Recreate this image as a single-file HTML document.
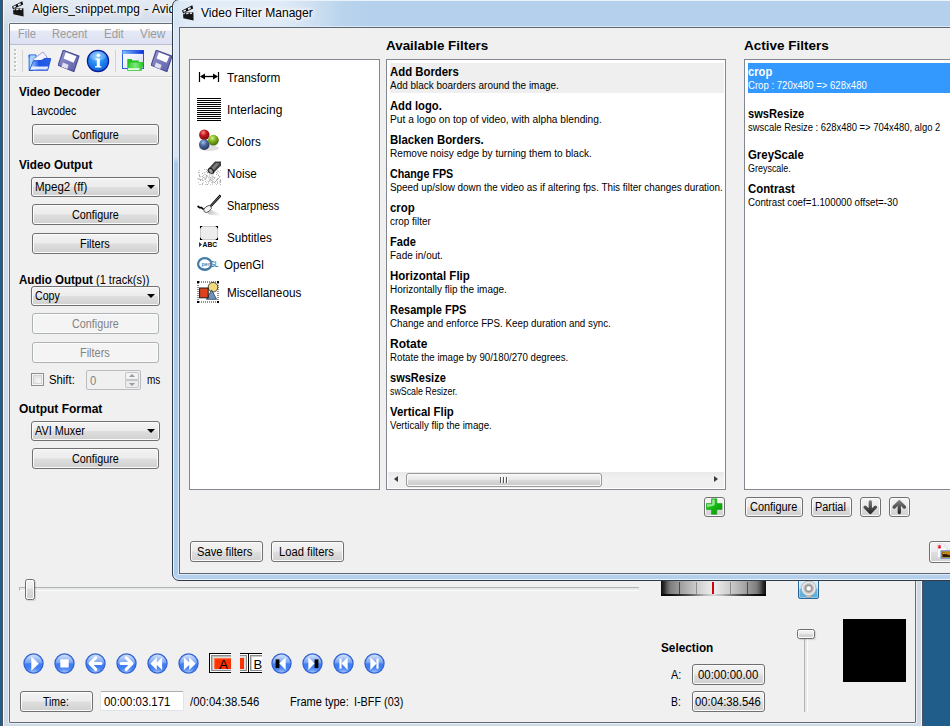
<!DOCTYPE html>
<html lang="en"><head>
<meta charset="utf-8">
<title>Video Filter Manager</title>
<style>
*{box-sizing:border-box;margin:0;padding:0}
html,body{width:950px;height:726px;overflow:hidden;background:#215d8a}
body{position:relative;font-family:"Liberation Sans",sans-serif;font-size:12px;color:#000}
.a{position:absolute}
.t{position:absolute;white-space:nowrap;line-height:14px;height:14px;font-size:12px;transform-origin:0 0}
.b{font-weight:bold}
.h{font-weight:bold;font-size:13px}
.l{font-size:13px}
.d{font-size:10px}
.g{color:#9c9c9c}
.dis{color:#838383}
.w{color:#fff}
/* main window frame */
#mw{left:2px;top:-10px;width:921px;height:746px;background:#cfdae7;border:1px solid #4c525c;border-radius:7px;box-shadow:inset 0 0 0 1px #f4f8fc}
#mwt{left:4px;top:0;width:917px;height:23px;background:linear-gradient(#e4ebf3,#d9e2ed 60%,#d3dde9)}
#mwin{left:9px;top:23px;width:907px;height:700px;background:#f0f0f0;border:1px solid #666b73;border-radius:1px;box-shadow:0 0 0 1px #e9eff6}
#menubar{left:10px;top:24px;width:905px;height:21px;background:linear-gradient(#ffffff 0,#fcfcfe 30%,#e5e8f6 37%,#dde1f2 100%);border-bottom:1px solid #b9bfd0}
#toolbar{left:10px;top:45px;width:905px;height:33px;background:#f1f1f1;border-bottom:1px solid #fafafa;box-shadow:inset 0 -1px 0 #d0d0d0}
.btn{position:absolute;height:21px;border:1px solid #707070;border-radius:3px;background:linear-gradient(#f3f3f3 0,#ececec 47%,#dedede 53%,#d0d0d0 100%);box-shadow:inset 0 0 0 1px #fbfbfb}
.btn.off{border-color:#adb2b5;background:#f4f4f4;box-shadow:inset 0 0 0 1px #fcfcfc}
.arr{position:absolute;width:0;height:0;border:4px solid transparent;border-top:4px solid #000;border-bottom:0}
/* dialog */
#dlg{left:172px;top:-1px;width:800px;height:582px;background:#b4d0ec;border:1px solid #2e3a48;border-radius:7px 0 0 7px;box-shadow:inset 0 0 0 1px #eaf2fb}
#dlgt{left:174px;top:1px;width:790px;height:26px;border-radius:6px 0 0 0;background:linear-gradient(90deg,#d6e5f4 0,#e3edf8 18px,#e0ebf7 105px,#cfe0f2 138px,#bad4ed 168px,#b4d0ec 200px,#b4d0ec 100%)}
#dlgl{left:174px;top:27px;width:5px;height:547px;background:linear-gradient(#dbe7f4 0,#d6e4f3 130px,#a9caee 136px,#aaccef 100%)}
#dlgin{left:179px;top:27px;width:790px;height:547px;background:#f0f0f0;border:1px solid #5d6772;box-shadow:0 0 0 1px #dde9f6}
.list{position:absolute;background:#fff;border:1px solid #828790}
.rb{position:absolute;width:21px;height:21px}
</style>
</head>
<body>
<!-- MAIN WINDOW -->
<div class="a" id="mw"></div>
<div class="a" id="mwt"></div>
<div class="a" id="mwin"></div>
<div class="a" id="menubar"></div>
<div class="a" id="toolbar"></div>
<span class="t" style="font-size: 13px; text-shadow: rgb(255, 255, 255) 0px 0px 6px, rgb(255, 255, 255) 0px 0px 6px, rgb(255, 255, 255) 0px 0px 8px; left: 31.5px; top: 1.5px; transform: scaleX(0.9151);">Algiers_snippet.mpg</span>
<span class="t" style="font-size: 13px; text-shadow: rgb(255, 255, 255) 0px 0px 6px, rgb(255, 255, 255) 0px 0px 6px, rgb(255, 255, 255) 0px 0px 8px; left: 143.6px; top: 1.5px; transform: scaleX(1.105);">-</span>
<span class="t" style="font-size: 13px; text-shadow: rgb(255, 255, 255) 0px 0px 6px, rgb(255, 255, 255) 0px 0px 6px, rgb(255, 255, 255) 0px 0px 8px; transform: scaleX(0.92); left: 151.5px; top: 1.5px;">Avidemux</span>
<span class="t g" style="left: 17.5px; top: 26.8px; transform: scaleX(0.9202);">File</span>
<span class="t g" style="left: 51.5px; top: 26.8px; transform: scaleX(0.9282);">Recent</span>
<span class="t g" style="left: 103.5px; top: 26.8px; transform: scaleX(0.9571);">Edit</span>
<span class="t g" style="left: 140px; top: 26.8px; transform: scaleX(0.9807);">View</span>

<span class="t b" style="left: 19px; top: 84.8px; transform: scaleX(0.97);">Video Decoder</span>
<span class="t" style="left: 30.5px; top: 103.8px; transform: scaleX(0.8818);">Lavcodec</span>
<div class="btn" style="left:32px;top:124px;width:127px"></div>
<span class="t" style="left: 71.5px; top: 127.8px; transform: scaleX(0.8995);">Configure</span>
<span class="t b" style="left: 19px; top: 157.8px; transform: scaleX(0.9759);">Video Output</span>
<div class="btn" style="left:31px;top:177px;width:129px;height:20px"></div><i class="arr" style="left:147px;top:185px"></i>
<span class="t" style="left: 34.5px; top: 179.8px; transform: scaleX(0.9602);">Mpeg2 (ff)</span>
<div class="btn" style="left:32px;top:204px;width:127px"></div>
<span class="t" style="left: 71.5px; top: 207.8px; transform: scaleX(0.8995);">Configure</span>
<div class="btn" style="left:32px;top:233px;width:127px"></div>
<span class="t" style="left: 80px; top: 236.8px; transform: scaleX(0.9121);">Filters</span>
<span class="t b" style="left: 19px; top: 272.8px; transform: scaleX(0.9629);">Audio Output</span>
<span class="t" style="left: 96px; top: 272.8px; transform: scaleX(0.919);">(1 track(s))</span>
<div class="btn" style="left:31px;top:286px;width:129px;height:20px"></div><i class="arr" style="left:147px;top:294px"></i>
<span class="t" style="left: 34.5px; top: 288.8px; transform: scaleX(0.8852);">Copy</span>
<div class="btn off" style="left:32px;top:313px;width:127px"></div>
<span class="t dis" style="left: 71.5px; top: 316.8px; transform: scaleX(0.8995);">Configure</span>
<div class="btn off" style="left:32px;top:342px;width:127px"></div>
<span class="t dis" style="left: 80px; top: 345.8px; transform: scaleX(0.9121);">Filters</span>
<div class="a" style="left:31px;top:373px;width:13px;height:13px;border:1px solid #8e8f8f;background:#f4f4f4;box-shadow:inset 0 0 0 1px #f4f4f4,inset 0 0 0 2px #d2d4d6,inset 2px 2px 3px 2px #e2e3e5"></div>
<span class="t" style="left: 48.5px; top: 372.8px; transform: scaleX(0.943);">Shift:</span>
<div class="a" style="left:86px;top:370px;width:55px;height:20px;border:1px solid #b9bdc2;border-radius:2px;background:#f0f0f0"></div>
<span class="t dis" style="left: 89.5px; top: 373.8px; transform: scaleX(0.9421);">0</span>
<div class="a" style="left:125px;top:372px;width:14px;height:8px;border:1px solid #c4c6c9;border-radius:2px 2px 0 0;background:#f2f2f2"></div>
<div class="a" style="left:125px;top:380px;width:14px;height:8px;border:1px solid #c4c6c9;border-radius:0 0 2px 2px;background:#ebebeb"></div>
<i class="a" style="left:129px;top:374px;border:3px solid transparent;border-bottom:3px solid #9a9a9a;border-top:0"></i>
<i class="a" style="left:129px;top:383px;border:3px solid transparent;border-top:3px solid #9a9a9a;border-bottom:0"></i>
<span class="t" style="left: 146.5px; top: 372.8px; transform: scaleX(0.8313);">ms</span>
<span class="t b" style="left: 19px; top: 401.8px; transform: scaleX(0.9997);">Output Format</span>
<div class="btn" style="left:31px;top:421px;width:129px;height:20px"></div><i class="arr" style="left:147px;top:429px"></i>
<span class="t" style="left: 34.5px; top: 423.8px; transform: scaleX(0.9034);">AVI Muxer</span>
<div class="btn" style="left:32px;top:448px;width:127px"></div>
<span class="t" style="left: 71.5px; top: 451.8px; transform: scaleX(0.8995);">Configure</span>
<!-- title + toolbar icons -->
<svg width="0" height="0" style="position:absolute">
<defs>
<g id="clap">
<path d="M1 6.4 L11.3 1.2 L12.2 4.6 L2 9.2Z" fill="#111"></path>
<path d="M2.2 6.6 L4.6 5.4 L5 7 L2.8 8Z M6.8 4.3 L9.4 3 L9.8 4.7 L7.3 5.9Z" fill="#f2f2f2"></path>
<path d="M2 8.6 L12.4 8.2 L12.6 16.4 L2.3 14.2Z" fill="#161616"></path>
<path d="M2.3 8.9 L4.2 8.8 L3.4 10.2 L2.3 10.3Z M5.6 8.8 L8 8.7 L7.2 10 L4.9 10.2Z M9.4 8.6 L11.4 8.5 L10.6 9.9 L8.6 10Z" fill="#e9e9e9"></path>
</g>
<linearGradient id="fl1" x1="0" y1="0" x2="1" y2="1"><stop offset="0" stop-color="#9395cf"></stop><stop offset="1" stop-color="#5c5ea6"></stop></linearGradient>
<g id="floppy">
<path d="M5.2 0.2 L21 6.2 L15.9 21.6 L0.1 15.3Z" fill="url(#fl1)" stroke="#484a90" stroke-width="1.100"></path>
<path d="M7.800 2.300 L18.300 6.300 L15.600 12.700 L5.600 8.600Z" fill="#fdfdff"></path>
<path d="M5 12.600 L10.800 14.900 L9.400 18.900 L3.500 16.700Z" fill="#e0e0f4"></path>
<path d="M10.6 15.2 L12.6 16 L11.4 19.3 L9.4 18.6Z" fill="#7173b4"></path>
</g>
<linearGradient id="fo1" x1="0" y1="0" x2="1" y2="0"><stop offset="0" stop-color="#bfe6ff"></stop><stop offset="0.45" stop-color="#1a55e8"></stop><stop offset="1" stop-color="#2a60e8"></stop></linearGradient>
<linearGradient id="wt" x1="0" y1="0" x2="1" y2="0"><stop offset="0" stop-color="#7cc0ff"></stop><stop offset="1" stop-color="#0a2fd6"></stop></linearGradient>
<linearGradient id="wb" x1="0" y1="0" x2="1" y2="1"><stop offset="0" stop-color="#ffffff"></stop><stop offset="1" stop-color="#d8dcf4"></stop></linearGradient>
<linearGradient id="gf" x1="0" y1="0" x2="1" y2="0"><stop offset="0" stop-color="#2fd12f"></stop><stop offset="0.5" stop-color="#7be87b"></stop><stop offset="1" stop-color="#22c022"></stop></linearGradient>
<radialGradient id="inf" cx="45%" cy="30%" r="75%"><stop offset="0" stop-color="#7cc4ff"></stop><stop offset="0.5" stop-color="#1e86f2"></stop><stop offset="1" stop-color="#0a58d8"></stop></radialGradient>
</defs>
</svg>
<svg class="a" style="left:11px;top:0" width="14" height="18" viewBox="0 0 14 18"><use href="#clap"></use></svg>
<!-- toolbar grip + separators -->
<div class="a" style="left:14px;top:49px;width:2px;height:2px;background:#c4c4c4;box-shadow:0 4px 0 #c4c4c4,0 8px 0 #c4c4c4,0 12px 0 #c4c4c4,0 16px 0 #c4c4c4,0 20px 0 #c4c4c4,1px 1px 0 #fff,1px 5px 0 #fff,1px 9px 0 #fff,1px 13px 0 #fff,1px 17px 0 #fff,1px 21px 0 #fff"></div>
<div class="a" style="left:22px;top:50px;width:1px;height:22px;background:#d2d2d2"></div>
<div class="a" style="left:115px;top:50px;width:1px;height:22px;background:#d2d2d2"></div>
<!-- open folder -->
<svg class="a" style="left:28px;top:50px" width="24" height="22" viewBox="0 0 24 22">
<path d="M1.2 5 H8 V7.5 H1.2Z M1.2 5 V20.4 H5" fill="#a8dcff" stroke="#1248d8" stroke-width="1"></path>
<path d="M1.7 5.5 H7.5 L4 20 H1.7Z" fill="#9ed6ff"></path>
<path d="M4.8 9.6 L15 2 L19.4 7.7 L9 12Z" fill="#f4f4ff" stroke="#7a7cc8" stroke-width="0.7"></path>
<path d="M5.5 10.8 L14 10.4 L16.5 8.4 L22.8 8.6 L19.7 20.3 L1.4 20.3Z" fill="url(#fo1)" stroke="#1040d0" stroke-width="0.8"></path>
<path d="M3.6 16.6 L20.2 16.6 L19.4 19.4 L2.6 19.4Z" fill="#f1f4ff" opacity="0.92"></path>
</svg>
<!-- floppy 1 -->
<svg class="a" style="left:58px;top:50px" width="22" height="22" viewBox="0 0 22 22"><use href="#floppy"></use></svg>
<!-- info -->
<svg class="a" style="left:86px;top:49px" width="24" height="24" viewBox="0 0 24 24">
<circle cx="12" cy="12" r="10.6" fill="url(#inf)" stroke="#0c1a96" stroke-width="1.2"></circle>
<ellipse cx="12" cy="7" rx="8" ry="4.6" fill="#fff" opacity="0.22"></ellipse>
<circle cx="12.4" cy="6.2" r="1.8" fill="#fff"></circle>
<path d="M9.4 9.6 H13.8 V17.2 H15.4 V18.4 H9 V17.2 H10.8 V10.8 H9.4Z" fill="#fff"></path>
</svg>
<!-- window + green folder -->
<svg class="a" style="left:121px;top:49px" width="24" height="23" viewBox="0 0 24 23">
<rect x="1.5" y="1.5" width="21" height="18" fill="url(#wb)" stroke="#2a5cdc" stroke-width="1"></rect>
<rect x="1.5" y="1.5" width="21" height="3.4" fill="url(#wt)"></rect>
<path d="M6.3 10 H10.6 L11.4 11.4 H17.8 V13 H22.6 L20.6 21.8 H6.3Z" fill="#22c222"></path>
<path d="M8.6 13.4 H22.6 L20.4 21 H6.6Z" fill="url(#gf)"></path>
<path d="M7.2 19.2 H18.6 L18.2 21 H6.8Z" fill="#eaffea"></path>
</svg>
<!-- floppy 2 -->
<svg class="a" style="left:151px;top:50px" width="22" height="22" viewBox="0 0 22 22"><use href="#floppy"></use></svg>
<!-- BOTTOM CONTROLS -->
<svg width="0" height="0" style="position:absolute">
<defs>
<linearGradient id="gloss" x1="0" y1="0" x2="0" y2="1"><stop offset="0" stop-color="#d4e2fb"></stop><stop offset="1" stop-color="#6f9df2"></stop></linearGradient>
<radialGradient id="glow" cx="50%" cy="100%" r="75%"><stop offset="0" stop-color="#a9c6fa"></stop><stop offset="0.6" stop-color="#5e93f4" stop-opacity="0.6"></stop><stop offset="1" stop-color="#3f7ef3" stop-opacity="0"></stop></radialGradient>
<g id="rb"><circle cx="10.5" cy="10.5" r="10.3" fill="#c9d3e6" opacity="0.6"></circle><circle cx="10.5" cy="10.5" r="9.5" fill="#3f7ef3" stroke="#3564d2" stroke-width="1.3"></circle><path d="M1.600 10.5 A8.900 8.900 0 0 1 19.400 10.5 Q10.5 9.300 1.600 10.5Z" fill="url(#gloss)"></path><path d="M1.600 10.500 A8.900 8.900 0 0 0 19.400 10.500Z" fill="url(#glow)"></path></g>
</defs>
</svg>
<!-- seek slider -->
<div class="a" style="left:19px;top:587px;width:620px;height:4px;border-top:1px solid #b2b2b2;border-left:1px solid #b2b2b2;border-bottom:1px solid #fcfcfc;background:#e7eaea"></div>
<div class="a" style="left:25px;top:579px;width:10px;height:21px;border:1px solid #6e6e6e;border-radius:2.500px;background:linear-gradient(#f3f3f3 0,#ebebeb 44%,#dcdcdc 46%,#cfcfcf 100%);box-shadow:inset 0 0 0 1px #fcfcfc,1px 1px 1px rgba(0,0,0,0.12)"></div>
<!-- round buttons -->
<svg class="rb" style="left:23.2px;top:652.7px" viewBox="0 0 21 21"><use href="#rb"></use><path d="M8.300 3.600 L15.800 10.700 L8.300 17.800Z" fill="#fff"></path></svg>
<svg class="rb" style="left:54.2px;top:652.7px" viewBox="0 0 21 21"><use href="#rb"></use><rect x="6.300" y="6.300" width="8.400" height="8.200" fill="#fff"></rect></svg>
<svg class="rb" style="left:85.2px;top:652.7px" viewBox="0 0 21 21"><use href="#rb"></use><path d="M16 10.600 H5.500 M10.800 4.800 L5 10.600 L10.800 16.400" stroke="#fff" stroke-width="3" stroke-linecap="round" stroke-linejoin="round" fill="none"></path></svg>
<svg class="rb" style="left:116.2px;top:652.7px" viewBox="0 0 21 21"><use href="#rb"></use><path d="M5 10.600 H15.500 M10.200 4.800 L16 10.600 L10.200 16.400" stroke="#fff" stroke-width="3" stroke-linecap="round" stroke-linejoin="round" fill="none"></path></svg>
<svg class="rb" style="left:147.2px;top:652.7px" viewBox="0 0 21 21"><use href="#rb"></use><path d="M3.300 10.700 L9.800 4.300 L9.800 17.100Z M8.600 10.700 L15.100 4.300 L15.100 17.100Z" fill="#fff"></path></svg>
<svg class="rb" style="left:178.2px;top:652.7px" viewBox="0 0 21 21"><use href="#rb"></use><path d="M17.700 10.700 L11.200 4.300 L11.200 17.100Z M12.400 10.700 L5.900 4.300 L5.900 17.100Z" fill="#fff"></path></svg>
<!-- A / B markers -->
<div class="a" style="left:209px;top:653px;width:22px;height:20px;border:1px solid #000;border-right:0;background:#fff"></div>
<div class="a" style="left:211px;top:655px;width:20px;height:16px;border:1px solid #8c8c8c;border-right:0;background:#dcdcdc;box-shadow:inset 1px 1px 0 #bdbdbd"></div>
<div class="a" style="left:214px;top:658px;width:17px;height:11px;background:#ff3300;box-shadow:inset 1px 1px 1px #ff7a52"></div>
<span class="t" style="font-size: 13px; left: 219.2px; top: 657.5px;">A</span>
<div class="a" style="left:240px;top:653px;width:22px;height:20px;overflow:hidden;border-top:1px solid #000;border-bottom:1px solid #000;background:#fff">
<div class="a" style="left:0;top:1px;width:7px;height:16px;border:1px solid #8c8c8c;border-left:0;background:#dcdcdc"></div>
<div class="a" style="left:0;top:4px;width:4px;height:11px;background:#ff3300"></div>
<div class="a" style="left:8px;top:0;width:1px;height:18px;background:#000"></div>
<div class="a" style="left:10px;top:1px;width:14px;height:16px;border:1px solid #8c8c8c;background:#fff;box-shadow:inset 1px 1px 0 #c9c9c9"></div>
<span class="t" style="font-size: 13px; left: 13.5px; top: 3.5px;">B</span>
</div>
<svg class="rb" style="left:271.2px;top:652.7px" viewBox="0 0 21 21"><use href="#rb"></use><rect x="4.600" y="6.400" width="3.800" height="8.700" fill="#000"></rect><path d="M8.400 10.600 L14.700 4.300 L14.700 16.900Z" fill="#fff"></path></svg>
<svg class="rb" style="left:302.2px;top:652.7px" viewBox="0 0 21 21"><use href="#rb"></use><rect x="12.600" y="6.400" width="3.800" height="8.700" fill="#000"></rect><path d="M12.600 10.600 L6.300 4.300 L6.300 16.900Z" fill="#fff"></path></svg>
<svg class="rb" style="left:333.2px;top:652.7px" viewBox="0 0 21 21"><use href="#rb"></use><rect x="6.400" y="5.600" width="2.200" height="10.100" fill="#fff"></rect><path d="M8.400 10.600 L14.700 4.300 L14.700 16.900Z" fill="#fff"></path></svg>
<svg class="rb" style="left:364.2px;top:652.7px" viewBox="0 0 21 21"><use href="#rb"></use><rect x="12.400" y="5.600" width="2.200" height="10.100" fill="#fff"></rect><path d="M12.600 10.600 L6.300 4.300 L6.300 16.900Z" fill="#fff"></path></svg>
<!-- time row -->
<div class="btn" style="left:20px;top:691px;width:73px"></div>
<span class="t" style="left: 42.5px; top: 694.8px; transform: scaleX(0.8727);">Time:</span>
<div class="a" style="left:100px;top:691px;width:84px;height:20px;border:1px solid #dfe4ea;border-top-color:#abadb3;border-radius:2px;background:#fff"></div>
<span class="t" style="left: 104px; top: 694.8px; transform: scaleX(0.9461);">00:00:03.171</span>
<span class="t" style="left: 190px; top: 694.8px; transform: scaleX(0.9441);">/00:04:38.546</span>
<span class="t" style="left: 289.5px; top: 694.8px; transform: scaleX(0.9183);">Frame type:</span>
<span class="t" style="left: 353.5px; top: 694.8px; transform: scaleX(0.9017);">I-BFF (03)</span>
<!-- jog wheel -->
<div class="a" style="left:661px;top:581px;width:105px;height:15px;background:linear-gradient(90deg,#0c0c0c 0,#2c2c2c 3%,#5e5e5e 6%,#7e7e7e 9%,#a4a4a4 20%,#cfcfcf 35%,#efefef 50%,#cfcfcf 65%,#a4a4a4 80%,#7e7e7e 91%,#5e5e5e 94%,#2c2c2c 97%,#0c0c0c 100%)"></div>
<div class="a" style="left:661px;top:594px;width:105px;height:2px;background:linear-gradient(90deg,#000 0,#111 10%,rgba(40,40,40,0.75) 25%,rgba(120,120,120,0.35) 42%,rgba(150,150,150,0.25) 50%,rgba(120,120,120,0.35) 58%,rgba(40,40,40,0.75) 75%,#111 90%,#000 100%)"></div>
<div class="a" style="left:661px;top:580px;width:105px;height:1px;background:#3a3a3a"></div>
<div class="a" style="left:679px;top:582px;width:1px;height:12px;background:#4a4a4a"></div>
<div class="a" style="left:696px;top:582px;width:1px;height:12px;background:#8e8e8e"></div>
<div class="a" style="left:712px;top:582px;width:2px;height:12px;background:#d4000c"></div>
<div class="a" style="left:730px;top:582px;width:1px;height:12px;background:#8e8e8e"></div>
<div class="a" style="left:747px;top:582px;width:1px;height:12px;background:#4a4a4a"></div>
<!-- speaker -->
<div class="a" style="left:798px;top:577px;width:21px;height:22px;border:1px solid #2c6699;border-radius:2px;background:linear-gradient(#dff1fc 0,#c4e3f6 52%,#6fb9e2 54%,#5aaedb 100%);box-shadow:inset 0 0 0 1px rgba(255,255,255,0.35)"></div>
<svg class="a" style="left:800px;top:580px" width="18" height="18" viewBox="0 0 18 18"><defs><radialGradient id="spk" cx="50%" cy="50%" r="50%"><stop offset="0" stop-color="#ffffff"></stop><stop offset="0.22" stop-color="#f4f4f4"></stop><stop offset="0.42" stop-color="#8f8f8f"></stop><stop offset="0.62" stop-color="#c4c4c4"></stop><stop offset="0.85" stop-color="#f0f0f0"></stop><stop offset="1" stop-color="#cdcdcd"></stop></radialGradient></defs><path d="M5.400 14 H12 L11.400 17.200 H6Z" fill="#d9d9d9" stroke="#8c8c8c" stroke-width="0.700"></path><circle cx="8.700" cy="8.400" r="7.400" fill="url(#spk)" stroke="#9e9e9e" stroke-width="0.600"></circle></svg>
<!-- volume slider -->
<div class="a" style="left:804px;top:634px;width:4px;height:78px;border-left:1px solid #b2b2b2;border-right:1px solid #fcfcfc;background:#e7eaea"></div>
<div class="a" style="left:797px;top:629px;width:18px;height:10px;border:1px solid #6e6e6e;border-radius:2.500px;background:linear-gradient(#f3f3f3 0,#ebebeb 44%,#dcdcdc 46%,#cfcfcf 100%);box-shadow:inset 0 0 0 1px #fcfcfc,1px 1px 1px rgba(0,0,0,0.12)"></div>
<div class="a" style="left:843px;top:619px;width:63px;height:63px;background:#000"></div>
<!-- selection -->
<span class="t b" style="left: 661px; top: 640.8px; transform: scaleX(0.9801);">Selection</span>
<span class="t" style="left: 671px; top: 667.8px; transform: scaleX(0.908);">A:</span>
<div class="btn" style="left:692px;top:664px;width:73px"></div>
<span class="t" style="left: 697.5px; top: 667.8px; transform: scaleX(0.951);">00:00:00.00</span>
<span class="t" style="left: 671px; top: 694.8px; transform: scaleX(0.8639);">B:</span>
<div class="btn" style="left:692px;top:691px;width:73px"></div>
<span class="t" style="left: 695px; top: 694.8px; transform: scaleX(0.939);">00:04:38.546</span>
<!-- DIALOG -->
<div class="a" id="dlg"></div>
<div class="a" id="dlgt"></div>
<div class="a" id="dlgl"></div>
<div class="a" id="dlgin"></div>
<span class="t" style="font-size: 13px; text-shadow: rgb(255, 255, 255) 0px 0px 6px, rgb(255, 255, 255) 0px 0px 6px, rgb(255, 255, 255) 0px 0px 8px; left: 201px; top: 5.5px; transform: scaleX(0.9283);">Video Filter Manager</span>
<svg class="a" style="left:181px;top:4px" width="14" height="18" viewBox="0 0 14 18"><use href="#clap"></use></svg>
<!-- category list -->
<div class="list" style="left:189px;top:59px;width:191px;height:431px"></div>
<span class="t l" style="left: 227px; top: 70.5px; transform: scaleX(0.9072);">Transform</span>
<span class="t l" style="left: 227px; top: 102.5px; transform: scaleX(0.9219);">Interlacing</span>
<span class="t l" style="left: 227px; top: 134.5px; transform: scaleX(0.8995);">Colors</span>
<span class="t l" style="left: 227px; top: 166.5px; transform: scaleX(0.8962);">Noise</span>
<span class="t l" style="left: 227px; top: 198.5px; transform: scaleX(0.8414);">Sharpness</span>
<span class="t l" style="left: 227px; top: 230.5px; transform: scaleX(0.8982);">Subtitles</span>
<span class="t l" style="left: 224px; top: 257.5px; transform: scaleX(0.8881);">OpenGl</span>
<span class="t l" style="left: 227px; top: 285.5px; transform: scaleX(0.902);">Miscellaneous</span>
<!-- available filters -->
<span class="t h" style="left: 386px; top: 38.5px; transform: scaleX(1.0309);">Available Filters</span>
<div class="list" style="left:386px;top:59px;width:340px;height:431px"></div>
<div class="a" style="left:390px;top:63px;width:334px;height:30px;background:#efefef"></div>
<span class="t b l" style="left: 390px; top: 64.5px; transform: scaleX(0.8738);">Add Borders</span>
<span class="t d" style="left: 390px; top: 78.5px; transform: scaleX(0.9955);">Add black boarders around the image.</span>
<span class="t b l" style="left: 390px; top: 98.5px; transform: scaleX(0.8642);">Add logo.</span>
<span class="t d" style="left: 390px; top: 112.5px; transform: scaleX(1.0213);">Put a logo on top of video, with alpha blending.</span>
<span class="t b l" style="left: 390px; top: 132.5px; transform: scaleX(0.8771);">Blacken Borders.</span>
<span class="t d" style="left: 390px; top: 146.5px; transform: scaleX(1.0084);">Remove noisy edge by turning them to black.</span>
<span class="t b l" style="left: 390px; top: 166.5px; transform: scaleX(0.8266);">Change FPS</span>
<span class="t d" style="left: 390px; top: 180.5px; transform: scaleX(0.9885);">Speed up/slow down the video as if altering fps. This filter changes duration.</span>
<span class="t b l" style="left: 390px; top: 200.5px; transform: scaleX(0.8803);">crop</span>
<span class="t d" style="left: 390px; top: 214.5px; transform: scaleX(0.9921);">crop filter</span>
<span class="t b l" style="left: 390px; top: 234.5px; transform: scaleX(0.8503);">Fade</span>
<span class="t d" style="left: 390px; top: 248.5px; transform: scaleX(0.9998);">Fade in/out.</span>
<span class="t b l" style="left: 390px; top: 268.5px; transform: scaleX(0.8839);">Horizontal Flip</span>
<span class="t d" style="left: 390px; top: 282.5px; transform: scaleX(0.9959);">Horizontally flip the image.</span>
<span class="t b l" style="left: 390px; top: 302.5px; transform: scaleX(0.8447);">Resample FPS</span>
<span class="t d" style="left: 390px; top: 316.5px; transform: scaleX(0.9758);">Change and enforce FPS. Keep duration and sync.</span>
<span class="t b l" style="left: 390px; top: 336.5px; transform: scaleX(0.9221);">Rotate</span>
<span class="t d" style="left: 390px; top: 350.5px; transform: scaleX(0.9689);">Rotate the image by 90/180/270 degrees.</span>
<span class="t b l" style="left: 389.5px; top: 370.5px; transform: scaleX(0.8485);">swsResize</span>
<span class="t d" style="left: 389.5px; top: 384.5px; transform: scaleX(0.8839);">swScale Resizer.</span>
<span class="t b l" style="left: 390px; top: 404.5px; transform: scaleX(0.8742);">Vertical Flip</span>
<span class="t d" style="left: 390px; top: 418.5px; transform: scaleX(0.9689);">Vertically flip the image.</span>
<!-- h scrollbar -->
<div class="a" style="left:388px;top:472px;width:336px;height:16px;background:linear-gradient(#e9e9e9,#f1f1f1 40%,#f0f0f0)"></div>
<i class="a" style="left:394px;top:476px;border:3.500px solid transparent;border-right:4px solid #3a3a3a;border-left:0"></i>
<i class="a" style="left:714px;top:476px;border:3.500px solid transparent;border-left:4px solid #3a3a3a;border-right:0"></i>
<div class="a" style="left:406px;top:473px;width:196px;height:14px;border:1px solid #989898;border-radius:3px;background:linear-gradient(#f5f5f5 0,#e9e9e9 45%,#d8d8d8 55%,#c8c8c8 100%);box-shadow:inset 0 0 0 1px #fafafa"></div>
<div class="a" style="left:500px;top:477px;width:1px;height:6px;background:#555;box-shadow:3px 0 0 #555,6px 0 0 #555,1px 0 0 #fff,4px 0 0 #fff,7px 0 0 #fff"></div>
<!-- add button -->
<div class="btn" style="left:704px;top:497px;width:21px;height:20px"></div>
<svg class="a" style="left:706px;top:498.400px" width="17" height="17" viewBox="0 0 17 17"><defs><linearGradient id="pg" x1="0" y1="0" x2="1" y2="1"><stop offset="0" stop-color="#35d835"></stop><stop offset="0.5" stop-color="#12b812"></stop><stop offset="1" stop-color="#0a930a"></stop></linearGradient></defs><path d="M5.500 0.800 H10.800 V5.600 H16 V11.400 H10.800 V16.200 H5.500 V11.400 H0.300 V5.600 H5.500Z" fill="url(#pg)" stroke="#0d9a0d" stroke-width="0.600" stroke-linejoin="round"></path><path d="M6.200 1.500 H8.800 V6.300 Q8.800 8.500 1 8.700 V6.300 H6.200Z" fill="#b9f2b9" opacity="0.750"></path></svg>
<!-- active filters -->
<span class="t h" style="left: 744px; top: 38.5px; transform: scaleX(1.0385);">Active Filters</span>
<div class="list" style="left:744px;top:59px;width:241px;height:431px"></div>
<div class="a" style="left:748px;top:63px;width:210px;height:30px;background:#3399ff"></div>
<span class="t b l w" style="left: 748px; top: 64.5px; transform: scaleX(0.8626);">crop</span>
<span class="t d w" style="left: 748px; top: 78.5px; transform: scaleX(0.9582);">Crop : 720x480 =&gt; 628x480</span>
<span class="t b l" style="left: 747.5px; top: 106.5px; transform: scaleX(0.8561);">swsResize</span>
<span class="t d" style="left: 747.5px; top: 120.5px; transform: scaleX(0.9425);">swscale Resize : 628x480 =&gt; 704x480, algo 2</span>
<span class="t b l" style="left: 748px; top: 147.5px; transform: scaleX(0.8772);">GreyScale</span>
<span class="t d" style="left: 748px; top: 161.5px; transform: scaleX(0.8955);">Greyscale.</span>
<span class="t b l" style="left: 748px; top: 181.5px; transform: scaleX(0.8755);">Contrast</span>
<span class="t d" style="left: 748px; top: 195.5px; transform: scaleX(0.9704);">Contrast coef=1.100000 offset=-30</span>
<div class="btn" style="left:745px;top:497px;width:58px;height:20px"></div>
<span class="t" style="left: 749.5px; top: 499.8px; transform: scaleX(0.9091);">Configure</span>
<div class="btn" style="left:811px;top:497px;width:41px;height:20px"></div>
<span class="t" style="left: 815px; top: 499.8px; transform: scaleX(0.9055);">Partial</span>
<svg width="0" height="0" style="position:absolute"><defs><linearGradient id="ag" x1="0" y1="0" x2="0" y2="1"><stop offset="0" stop-color="#777"></stop><stop offset="1" stop-color="#2b2b2b"></stop></linearGradient></defs></svg>
<div class="btn" style="left:860px;top:497px;width:21px;height:20px"></div>
<svg class="a" style="left:860px;top:497px" width="21" height="20" viewBox="0 0 21 20"><path d="M10.300 4.800 V15 M5.200 10.200 L10.300 15.400 L15.400 10.200" stroke="url(#ag)" stroke-width="3.300" stroke-linecap="round" stroke-linejoin="round" fill="none"></path></svg>
<div class="btn" style="left:889px;top:497px;width:21px;height:20px"></div>
<svg class="a" style="left:889px;top:497px" width="21" height="20" viewBox="0 0 21 20"><path d="M10.300 15.500 V5.200 M5.200 10 L10.300 4.800 L15.400 10" stroke="url(#ag)" stroke-width="3.300" stroke-linecap="round" stroke-linejoin="round" fill="none"></path></svg>
<!-- save / load -->
<div class="btn" style="left:190px;top:541px;width:73px"></div>
<span class="t" style="left: 197.2px; top: 544.8px; transform: scaleX(0.9316);">Save filters</span>
<div class="btn" style="left:271px;top:541px;width:73px"></div>
<span class="t" style="left: 279px; top: 544.8px; transform: scaleX(0.9335);">Load filters</span>
<div class="btn" style="left:929px;top:541px;width:40px;height:22px"></div>
<svg class="a" style="left:936px;top:543px" width="14" height="17" viewBox="0 0 14 17"><path d="M1.500 1 H7.500 L11 4.500 V14.500 H1.500Z" fill="#fbfbfd" stroke="#d5d8e4" stroke-width="0.800"></path><path d="M7.500 1 V4.500 H11Z" fill="#e3e6f0"></path><path d="M2.200 2.600 L4.800 5.200 M4.800 2.600 L2.200 5.200 M3.500 2.200 V5.600" stroke="#f0101c" stroke-width="1.100"></path><rect x="5" y="7.800" width="10" height="7.400" fill="#c8850c" stroke="#5c90e6" stroke-width="1"></rect><path d="M6.500 10 Q9 8.600 11 11 T14 11.500 V14 H6.500Z" fill="#2e1c04"></path><path d="M7 10.600 Q9 9.600 10.500 11" stroke="#f3c96a" stroke-width="0.900" fill="none"></path></svg>
<!-- category icons -->
<svg class="a" style="left:197px;top:70px" width="24" height="14" viewBox="0 0 24 14">
<path d="M2.500 2 V12 M21.500 2 V12" stroke="#000" stroke-width="1.200" fill="none"></path><path d="M4 6.500 H20" stroke="#000" stroke-width="1.300" fill="none"></path>
<path d="M3 6.500 L8 3.600 V9.400Z M21 6.500 L16 3.600 V9.400Z" fill="#000"></path>
</svg>
<svg class="a" style="left:197px;top:98px" width="24" height="24" viewBox="0 0 24 24"><rect x="0" y="0" width="24" height="1" fill="#000"></rect><rect x="0" y="2" width="24" height="1" fill="#000"></rect><rect x="0" y="4" width="24" height="1" fill="#000"></rect><rect x="0" y="6" width="24" height="1" fill="#000"></rect><rect x="0" y="8" width="24" height="1" fill="#000"></rect><rect x="0" y="10" width="24" height="1" fill="#000"></rect><rect x="0" y="12" width="24" height="1" fill="#000"></rect><rect x="0" y="14" width="24" height="1" fill="#000"></rect><rect x="0" y="16" width="24" height="1" fill="#000"></rect><rect x="0" y="18" width="24" height="1" fill="#000"></rect><rect x="0" y="20" width="24" height="1" fill="#000"></rect><rect x="0" y="22" width="24" height="1" fill="#000"></rect></svg>
<svg class="a" style="left:197px;top:128px" width="26" height="24" viewBox="0 0 26 24">
<defs>
<radialGradient id="cr" cx="40%" cy="30%" r="70%"><stop offset="0" stop-color="#f08a8a"></stop><stop offset="0.45" stop-color="#c41818"></stop><stop offset="1" stop-color="#7a0808"></stop></radialGradient>
<radialGradient id="cg" cx="40%" cy="30%" r="70%"><stop offset="0" stop-color="#d6f08a"></stop><stop offset="0.45" stop-color="#7fb41e"></stop><stop offset="1" stop-color="#476a08"></stop></radialGradient>
<radialGradient id="cb" cx="40%" cy="30%" r="70%"><stop offset="0" stop-color="#a9bfe2"></stop><stop offset="0.45" stop-color="#4a68a0"></stop><stop offset="1" stop-color="#24365e"></stop></radialGradient>
</defs>
<ellipse cx="12" cy="20" rx="10" ry="3" fill="#000" opacity="0.13"></ellipse>
<circle cx="7.3" cy="6.7" r="5.2" fill="url(#cr)"></circle>
<circle cx="7.3" cy="16.6" r="5.3" fill="url(#cb)"></circle>
<circle cx="16.4" cy="12.2" r="5.4" fill="url(#cg)"></circle>
</svg>
<svg class="a" style="left:197px;top:161px" width="24" height="24" viewBox="0 0 24 24">
<rect x="11" y="16" width="1" height="1" fill="#c9c9c9"></rect><rect x="4" y="15" width="1" height="1" fill="#e0e0e0"></rect><rect x="19" y="19" width="1" height="1" fill="#a9a9a9"></rect><rect x="23" y="18" width="1" height="1" fill="#c9c9c9"></rect><rect x="15" y="21" width="1" height="1" fill="#b9b9b9"></rect><rect x="5" y="12" width="1" height="1" fill="#a9a9a9"></rect><rect x="8" y="17" width="1" height="1" fill="#c9c9c9"></rect><rect x="24" y="21" width="1" height="1" fill="#d6d6d6"></rect><rect x="18" y="16" width="1" height="1" fill="#e0e0e0"></rect><rect x="9" y="23" width="1" height="1" fill="#b9b9b9"></rect><rect x="5" y="23" width="1" height="1" fill="#a9a9a9"></rect><rect x="24" y="14" width="1" height="1" fill="#cfcfcf"></rect><rect x="5" y="19" width="1" height="1" fill="#d6d6d6"></rect><rect x="8" y="23" width="1" height="1" fill="#b9b9b9"></rect><rect x="3" y="19" width="1" height="1" fill="#a9a9a9"></rect><rect x="3" y="18" width="1" height="1" fill="#a9a9a9"></rect><rect x="14" y="17" width="1" height="1" fill="#c9c9c9"></rect><rect x="8" y="13" width="1" height="1" fill="#b9b9b9"></rect><rect x="5" y="18" width="1" height="1" fill="#d6d6d6"></rect><rect x="20" y="12" width="1" height="1" fill="#cfcfcf"></rect><rect x="9" y="16" width="1" height="1" fill="#b9b9b9"></rect><rect x="6" y="19" width="1" height="1" fill="#e0e0e0"></rect><rect x="16" y="18" width="1" height="1" fill="#c9c9c9"></rect><rect x="22" y="11" width="1" height="1" fill="#d6d6d6"></rect><rect x="10" y="12" width="1" height="1" fill="#d6d6d6"></rect><rect x="9" y="17" width="1" height="1" fill="#d6d6d6"></rect><rect x="3" y="15" width="1" height="1" fill="#cfcfcf"></rect><rect x="17" y="17" width="1" height="1" fill="#b9b9b9"></rect><rect x="22" y="16" width="1" height="1" fill="#d6d6d6"></rect><rect x="12" y="20" width="1" height="1" fill="#b9b9b9"></rect><rect x="22" y="20" width="1" height="1" fill="#d6d6d6"></rect><rect x="21" y="17" width="1" height="1" fill="#a9a9a9"></rect><rect x="9" y="8" width="1" height="1" fill="#b9b9b9"></rect><rect x="15" y="24" width="1" height="1" fill="#cfcfcf"></rect><rect x="8" y="23" width="1" height="1" fill="#a9a9a9"></rect><rect x="11" y="21" width="1" height="1" fill="#e0e0e0"></rect><rect x="1" y="18" width="1" height="1" fill="#c9c9c9"></rect><rect x="12" y="20" width="1" height="1" fill="#a9a9a9"></rect><rect x="12" y="12" width="1" height="1" fill="#d6d6d6"></rect><rect x="22" y="22" width="1" height="1" fill="#e0e0e0"></rect><rect x="22" y="11" width="1" height="1" fill="#d6d6d6"></rect><rect x="20" y="22" width="1" height="1" fill="#d6d6d6"></rect><rect x="22" y="21" width="1" height="1" fill="#e0e0e0"></rect><rect x="24" y="15" width="1" height="1" fill="#b9b9b9"></rect><rect x="7" y="18" width="1" height="1" fill="#d6d6d6"></rect><rect x="1" y="21" width="1" height="1" fill="#c9c9c9"></rect><rect x="19" y="24" width="1" height="1" fill="#b9b9b9"></rect><rect x="23" y="19" width="1" height="1" fill="#a9a9a9"></rect><rect x="6" y="19" width="1" height="1" fill="#e0e0e0"></rect><rect x="17" y="11" width="1" height="1" fill="#d6d6d6"></rect><rect x="13" y="23" width="1" height="1" fill="#c9c9c9"></rect><rect x="2" y="23" width="1" height="1" fill="#c9c9c9"></rect><rect x="0" y="17" width="1" height="1" fill="#e0e0e0"></rect><rect x="19" y="23" width="1" height="1" fill="#cfcfcf"></rect><rect x="19" y="23" width="1" height="1" fill="#c9c9c9"></rect><rect x="22" y="24" width="1" height="1" fill="#e0e0e0"></rect><rect x="23" y="23" width="1" height="1" fill="#cfcfcf"></rect><rect x="21" y="14" width="1" height="1" fill="#a9a9a9"></rect><rect x="8" y="15" width="1" height="1" fill="#b9b9b9"></rect><rect x="5" y="22" width="1" height="1" fill="#b9b9b9"></rect><rect x="17" y="21" width="1" height="1" fill="#a9a9a9"></rect><rect x="14" y="19" width="1" height="1" fill="#a9a9a9"></rect><rect x="13" y="13" width="1" height="1" fill="#e0e0e0"></rect><rect x="13" y="17" width="1" height="1" fill="#e0e0e0"></rect><rect x="13" y="24" width="1" height="1" fill="#b9b9b9"></rect><rect x="10" y="23" width="1" height="1" fill="#d6d6d6"></rect><rect x="6" y="16" width="1" height="1" fill="#a9a9a9"></rect><rect x="23" y="9" width="1" height="1" fill="#b9b9b9"></rect><rect x="16" y="13" width="1" height="1" fill="#e0e0e0"></rect><rect x="12" y="16" width="1" height="1" fill="#e0e0e0"></rect><rect x="15" y="19" width="1" height="1" fill="#a9a9a9"></rect><rect x="13" y="11" width="1" height="1" fill="#e0e0e0"></rect><rect x="15" y="22" width="1" height="1" fill="#cfcfcf"></rect><rect x="15" y="14" width="1" height="1" fill="#e0e0e0"></rect><rect x="8" y="23" width="1" height="1" fill="#c9c9c9"></rect><rect x="21" y="10" width="1" height="1" fill="#cfcfcf"></rect><rect x="2" y="14" width="1" height="1" fill="#a9a9a9"></rect><rect x="13" y="19" width="1" height="1" fill="#cfcfcf"></rect><rect x="16" y="8" width="1" height="1" fill="#cfcfcf"></rect><rect x="9" y="21" width="1" height="1" fill="#cfcfcf"></rect><rect x="12" y="20" width="1" height="1" fill="#cfcfcf"></rect><rect x="20" y="21" width="1" height="1" fill="#b9b9b9"></rect><rect x="1" y="17" width="1" height="1" fill="#e0e0e0"></rect><rect x="12" y="11" width="1" height="1" fill="#c9c9c9"></rect><rect x="20" y="24" width="1" height="1" fill="#b9b9b9"></rect><rect x="10" y="14" width="1" height="1" fill="#d6d6d6"></rect><rect x="10" y="11" width="1" height="1" fill="#e0e0e0"></rect><rect x="19" y="13" width="1" height="1" fill="#cfcfcf"></rect><rect x="8" y="20" width="1" height="1" fill="#b9b9b9"></rect><rect x="18" y="20" width="1" height="1" fill="#a9a9a9"></rect><rect x="9" y="15" width="1" height="1" fill="#c9c9c9"></rect><rect x="15" y="18" width="1" height="1" fill="#cfcfcf"></rect><rect x="7" y="11" width="1" height="1" fill="#c9c9c9"></rect><rect x="15" y="19" width="1" height="1" fill="#e0e0e0"></rect><rect x="6" y="14" width="1" height="1" fill="#c9c9c9"></rect><rect x="9" y="23" width="1" height="1" fill="#c9c9c9"></rect><rect x="21" y="17" width="1" height="1" fill="#a9a9a9"></rect><rect x="23" y="15" width="1" height="1" fill="#e0e0e0"></rect><rect x="7" y="16" width="1" height="1" fill="#d6d6d6"></rect><rect x="7" y="8" width="1" height="1" fill="#b9b9b9"></rect><rect x="1" y="13" width="1" height="1" fill="#e0e0e0"></rect><rect x="24" y="23" width="1" height="1" fill="#c9c9c9"></rect><rect x="20" y="18" width="1" height="1" fill="#e0e0e0"></rect><rect x="9" y="10" width="1" height="1" fill="#c9c9c9"></rect><rect x="16" y="15" width="1" height="1" fill="#e0e0e0"></rect><rect x="20" y="10" width="1" height="1" fill="#c9c9c9"></rect><rect x="19" y="18" width="1" height="1" fill="#d6d6d6"></rect><rect x="15" y="20" width="1" height="1" fill="#c9c9c9"></rect><rect x="15" y="20" width="1" height="1" fill="#c9c9c9"></rect><rect x="12" y="18" width="1" height="1" fill="#cfcfcf"></rect><rect x="1" y="9" width="1" height="1" fill="#a9a9a9"></rect><rect x="1" y="9" width="1" height="1" fill="#d6d6d6"></rect><rect x="13" y="18" width="1" height="1" fill="#a9a9a9"></rect><rect x="8" y="13" width="1" height="1" fill="#c9c9c9"></rect><rect x="20" y="9" width="1" height="1" fill="#e0e0e0"></rect><rect x="20" y="20" width="1" height="1" fill="#cfcfcf"></rect><rect x="6" y="21" width="1" height="1" fill="#cfcfcf"></rect><rect x="20" y="18" width="1" height="1" fill="#cfcfcf"></rect><rect x="14" y="15" width="1" height="1" fill="#e0e0e0"></rect><rect x="2" y="17" width="1" height="1" fill="#cfcfcf"></rect><rect x="11" y="21" width="1" height="1" fill="#d6d6d6"></rect><rect x="5" y="19" width="1" height="1" fill="#d6d6d6"></rect><rect x="12" y="20" width="1" height="1" fill="#c9c9c9"></rect><rect x="5" y="19" width="1" height="1" fill="#b9b9b9"></rect><rect x="22" y="19" width="1" height="1" fill="#e0e0e0"></rect><rect x="19" y="13" width="1" height="1" fill="#a9a9a9"></rect><rect x="23" y="20" width="1" height="1" fill="#b9b9b9"></rect><rect x="9" y="14" width="1" height="1" fill="#a9a9a9"></rect><rect x="14" y="21" width="1" height="1" fill="#d6d6d6"></rect><rect x="21" y="13" width="1" height="1" fill="#e0e0e0"></rect><rect x="1" y="11" width="1" height="1" fill="#b9b9b9"></rect><rect x="16" y="21" width="1" height="1" fill="#e0e0e0"></rect><rect x="7" y="17" width="1" height="1" fill="#d6d6d6"></rect><rect x="18" y="22" width="1" height="1" fill="#cfcfcf"></rect><rect x="10" y="19" width="1" height="1" fill="#e0e0e0"></rect><rect x="8" y="15" width="1" height="1" fill="#d6d6d6"></rect><rect x="16" y="16" width="1" height="1" fill="#cfcfcf"></rect><rect x="2" y="18" width="1" height="1" fill="#cfcfcf"></rect><rect x="2" y="15" width="1" height="1" fill="#b9b9b9"></rect><rect x="10" y="15" width="1" height="1" fill="#cfcfcf"></rect><rect x="4" y="18" width="1" height="1" fill="#d6d6d6"></rect><rect x="5" y="15" width="1" height="1" fill="#b9b9b9"></rect><rect x="11" y="20" width="1" height="1" fill="#c9c9c9"></rect><rect x="19" y="11" width="1" height="1" fill="#a9a9a9"></rect><rect x="8" y="11" width="1" height="1" fill="#e0e0e0"></rect><rect x="6" y="19" width="1" height="1" fill="#c9c9c9"></rect><rect x="11" y="22" width="1" height="1" fill="#d6d6d6"></rect><rect x="15" y="23" width="1" height="1" fill="#d6d6d6"></rect><rect x="16" y="20" width="1" height="1" fill="#c9c9c9"></rect><rect x="10" y="11" width="1" height="1" fill="#a9a9a9"></rect><rect x="23" y="21" width="1" height="1" fill="#b9b9b9"></rect><rect x="16" y="12" width="1" height="1" fill="#a9a9a9"></rect><rect x="22" y="15" width="1" height="1" fill="#a9a9a9"></rect><rect x="15" y="11" width="1" height="1" fill="#d6d6d6"></rect><rect x="3" y="23" width="1" height="1" fill="#c9c9c9"></rect><rect x="15" y="24" width="1" height="1" fill="#e0e0e0"></rect><rect x="1" y="17" width="1" height="1" fill="#c9c9c9"></rect><rect x="20" y="22" width="1" height="1" fill="#b9b9b9"></rect><rect x="8" y="18" width="1" height="1" fill="#a9a9a9"></rect><rect x="13" y="16" width="1" height="1" fill="#c9c9c9"></rect><rect x="10" y="23" width="1" height="1" fill="#a9a9a9"></rect><rect x="5" y="17" width="1" height="1" fill="#c9c9c9"></rect><rect x="23" y="23" width="1" height="1" fill="#a9a9a9"></rect><rect x="2" y="13" width="1" height="1" fill="#cfcfcf"></rect><rect x="2" y="9" width="1" height="1" fill="#cfcfcf"></rect><rect x="20" y="18" width="1" height="1" fill="#a9a9a9"></rect><rect x="17" y="16" width="1" height="1" fill="#b9b9b9"></rect><rect x="7" y="13" width="1" height="1" fill="#cfcfcf"></rect><rect x="2" y="11" width="1" height="1" fill="#b9b9b9"></rect><rect x="8" y="23" width="1" height="1" fill="#cfcfcf"></rect><rect x="15" y="15" width="1" height="1" fill="#b9b9b9"></rect><rect x="20" y="17" width="1" height="1" fill="#c9c9c9"></rect><rect x="1" y="24" width="1" height="1" fill="#b9b9b9"></rect>
<path d="M11.6 7.6 L18 0.6 L24 0.6 L24 4.6 L16 12.6Z" fill="#3c3c3c"></path>
<path d="M13.4 8 L19 2 L22.6 2.4 L15.6 10.4Z" fill="#8a8a8a" opacity="0.8"></path>
<ellipse cx="13.8" cy="10" rx="2.9" ry="2.2" transform="rotate(40 13.8 10)" fill="#9c9c9c" stroke="#111" stroke-width="1"></ellipse>
<path d="M13 12 L12 17 L13 21 M15 12.500 L15.500 18" stroke="#cfcfcf" stroke-width="1" fill="none"></path>
</svg>
<svg class="a" style="left:197px;top:193px" width="24" height="24" viewBox="0 0 24 24">
<defs><linearGradient id="shd" x1="0" y1="0" x2="1" y2="0"><stop offset="0" stop-color="#000" stop-opacity="0.28"></stop><stop offset="1" stop-color="#000" stop-opacity="0"></stop></linearGradient></defs>
<path d="M9 18 L14 17 L24 21 L24 23 L12 21.6Z" fill="url(#shd)"></path>
<path d="M23.6 2.4 L13.6 13.2" stroke="#000" stroke-width="2.4"></path>
<path d="M23.2 2.8 L14 12.8" stroke="#cfcfcf" stroke-width="0.6"></path>
<path d="M0.6 13 L2.6 14.6 L4.4 14.6 L6.8 16.6" stroke="#000" stroke-width="1.7" fill="none"></path>
<ellipse cx="10.6" cy="16" rx="4.3" ry="2.7" transform="rotate(-38 10.6 16)" fill="#f4f4f4" stroke="#555" stroke-width="0.9"></ellipse>
</svg>
<svg class="a" style="left:197px;top:225px" width="24" height="24" viewBox="0 0 24 24">
<rect x="3.5" y="1.5" width="17" height="13" rx="1" fill="#ededed" stroke="#c9c9c9"></rect>
<path d="M3.500 3.200 V1.500 H5.200 M18.800 1.500 H20.500 V3.200 M20.500 12.800 V14.500 H18.800 M5.200 14.500 H3.500 V12.800" stroke="#000" stroke-width="1.100" fill="none"></path>
<path d="M2 17 L5 19.600 L2 22.2Z" fill="#1d3b60"></path>
<text x="5.600" y="22.3" font-family="Liberation Sans,sans-serif" font-weight="bold" font-size="6.800" textLength="14.5" lengthAdjust="spacingAndGlyphs" fill="#000">ABC</text>
</svg>
<svg class="a" style="left:197px;top:256px" width="24" height="16" viewBox="0 0 24 16">
<ellipse cx="7.800" cy="8" rx="6.700" ry="5.800" fill="none" stroke="#3f7ba6" stroke-width="2.200"></ellipse>
<path d="M2.200 11.5 Q8 15.500 14 11.200" stroke="#3f7aa6" stroke-width="1.100" fill="none"></path>
<text x="4.400" y="10.2" font-family="Liberation Sans,sans-serif" font-weight="bold" font-size="5.600" fill="#4b88b4">pen</text>
<text x="13.400" y="11" font-family="Liberation Sans,sans-serif" font-weight="bold" font-size="8.200" textLength="8" lengthAdjust="spacingAndGlyphs" fill="#4a7fb2">GL</text>
</svg>
<svg class="a" style="left:197.300px;top:280.500px" width="24" height="24" viewBox="0 0 24 24">
<g fill="#222"><rect x="2" y="0.5" width="1" height="1"></rect><rect x="2" y="20.5" width="1" height="1"></rect><rect x="4" y="0.5" width="1" height="1"></rect><rect x="4" y="20.5" width="1" height="1"></rect><rect x="6" y="0.5" width="1" height="1"></rect><rect x="6" y="20.5" width="1" height="1"></rect><rect x="8" y="0.5" width="1" height="1"></rect><rect x="8" y="20.5" width="1" height="1"></rect><rect x="10" y="0.5" width="1" height="1"></rect><rect x="10" y="20.5" width="1" height="1"></rect><rect x="12" y="0.5" width="1" height="1"></rect><rect x="12" y="20.5" width="1" height="1"></rect><rect x="14" y="0.5" width="1" height="1"></rect><rect x="14" y="20.5" width="1" height="1"></rect><rect x="16" y="0.5" width="1" height="1"></rect><rect x="16" y="20.5" width="1" height="1"></rect><rect x="18" y="0.5" width="1" height="1"></rect><rect x="18" y="20.5" width="1" height="1"></rect><rect x="20" y="0.5" width="1" height="1"></rect><rect x="20" y="20.5" width="1" height="1"></rect><rect x="0.5" y="2" width="1" height="1"></rect><rect x="20.5" y="2" width="1" height="1"></rect><rect x="0.5" y="4" width="1" height="1"></rect><rect x="20.5" y="4" width="1" height="1"></rect><rect x="0.5" y="6" width="1" height="1"></rect><rect x="20.5" y="6" width="1" height="1"></rect><rect x="0.5" y="8" width="1" height="1"></rect><rect x="20.5" y="8" width="1" height="1"></rect><rect x="0.5" y="10" width="1" height="1"></rect><rect x="20.5" y="10" width="1" height="1"></rect><rect x="0.5" y="12" width="1" height="1"></rect><rect x="20.5" y="12" width="1" height="1"></rect><rect x="0.5" y="14" width="1" height="1"></rect><rect x="20.5" y="14" width="1" height="1"></rect><rect x="0.5" y="16" width="1" height="1"></rect><rect x="20.5" y="16" width="1" height="1"></rect><rect x="0.5" y="18" width="1" height="1"></rect><rect x="20.5" y="18" width="1" height="1"></rect></g>
<rect x="0" y="0" width="2" height="2" fill="#000"></rect><rect x="20" y="0" width="2" height="2" fill="#000"></rect><rect x="0" y="20" width="2" height="2" fill="#000"></rect><rect x="20" y="20" width="2" height="2" fill="#000"></rect>
<circle cx="16" cy="6.200" r="4.800" fill="#f1d97c" stroke="#3a3a2a" stroke-width="0.900"></circle>
<path d="M14.600 9 L19.600 18.300 L9.400 18.300Z" fill="#6f92b8" stroke="#2c3e58" stroke-width="0.800"></path>
<rect x="2.600" y="7" width="8.600" height="9.800" fill="#e0401c" stroke="#1a1a1a" stroke-width="1"></rect>
</svg>


</body></html>
